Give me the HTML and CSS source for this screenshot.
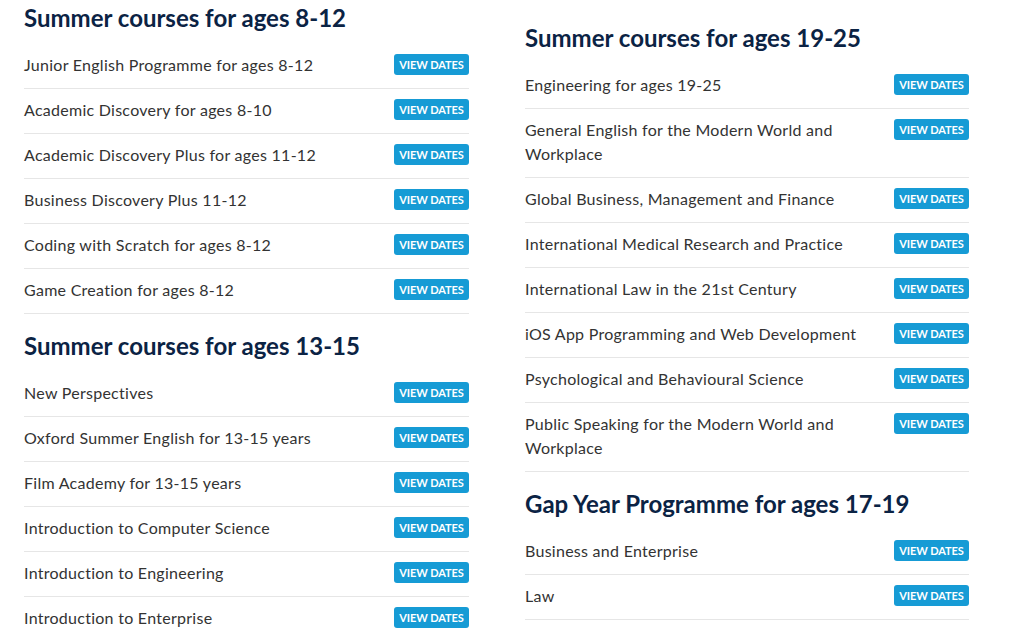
FILE: index.html
```html
<!DOCTYPE html>
<html lang="en">
<head>
<meta charset="utf-8">
<title>Summer courses</title>
<link rel="stylesheet" href="styles.css">
</head>
<body>
<div class="page">
  <div class="column column-left">
    <section class="group">
      <h2 class="group-title">Summer courses for ages 8-12</h2>
      <ul class="course-list">
        <li class="course"><span class="course-name">Junior English Programme for ages 8-12</span><a class="btn" href="#">View dates</a></li>
        <li class="course"><span class="course-name">Academic Discovery for ages 8-10</span><a class="btn" href="#">View dates</a></li>
        <li class="course"><span class="course-name">Academic Discovery Plus for ages 11-12</span><a class="btn" href="#">View dates</a></li>
        <li class="course"><span class="course-name">Business Discovery Plus 11-12</span><a class="btn" href="#">View dates</a></li>
        <li class="course"><span class="course-name">Coding with Scratch for ages 8-12</span><a class="btn" href="#">View dates</a></li>
        <li class="course"><span class="course-name">Game Creation for ages 8-12</span><a class="btn" href="#">View dates</a></li>
      </ul>
    </section>
    <section class="group">
      <h2 class="group-title">Summer courses for ages 13-15</h2>
      <ul class="course-list">
        <li class="course"><span class="course-name">New Perspectives</span><a class="btn" href="#">View dates</a></li>
        <li class="course"><span class="course-name">Oxford Summer English for 13-15 years</span><a class="btn" href="#">View dates</a></li>
        <li class="course"><span class="course-name">Film Academy for 13-15 years</span><a class="btn" href="#">View dates</a></li>
        <li class="course"><span class="course-name">Introduction to Computer Science</span><a class="btn" href="#">View dates</a></li>
        <li class="course"><span class="course-name">Introduction to Engineering</span><a class="btn" href="#">View dates</a></li>
        <li class="course"><span class="course-name">Introduction to Enterprise</span><a class="btn" href="#">View dates</a></li>
      </ul>
    </section>
  </div>
  <div class="column column-right">
    <section class="group">
      <h2 class="group-title">Summer courses for ages 19-25</h2>
      <ul class="course-list">
        <li class="course"><span class="course-name">Engineering for ages 19-25</span><a class="btn" href="#">View dates</a></li>
        <li class="course"><span class="course-name">General English for the Modern World and Workplace</span><a class="btn" href="#">View dates</a></li>
        <li class="course"><span class="course-name">Global Business, Management and Finance</span><a class="btn" href="#">View dates</a></li>
        <li class="course"><span class="course-name">International Medical Research and Practice</span><a class="btn" href="#">View dates</a></li>
        <li class="course"><span class="course-name">International Law in the 21st Century</span><a class="btn" href="#">View dates</a></li>
        <li class="course"><span class="course-name">iOS App Programming and Web Development</span><a class="btn" href="#">View dates</a></li>
        <li class="course"><span class="course-name">Psychological and Behavioural Science</span><a class="btn" href="#">View dates</a></li>
        <li class="course"><span class="course-name">Public Speaking for the Modern World and Workplace</span><a class="btn" href="#">View dates</a></li>
      </ul>
    </section>
    <section class="group">
      <h2 class="group-title">Gap Year Programme for ages 17-19</h2>
      <ul class="course-list">
        <li class="course"><span class="course-name">Business and Enterprise</span><a class="btn" href="#">View dates</a></li>
        <li class="course"><span class="course-name">Law</span><a class="btn" href="#">View dates</a></li>
      </ul>
    </section>
  </div>
</div>
</body>
</html>
```

FILE: styles.css
```css
html, body {
  margin: 0;
  padding: 0;
  background: #ffffff;
}

body {
  font-family: Lato, "Noto Sans", "Liberation Sans", sans-serif;
  color: #333333;
  overflow: hidden;
}

.page {
  display: grid;
  grid-template-columns: 445px 444px;
  column-gap: 56px;
  padding-left: 24px;
  align-items: start;
}

.column-left {
  padding-top: 3px;
}

.column-right {
  padding-top: 23px;
}

.group-title {
  margin: 17px 0 11px;
  font-size: 24px;
  line-height: 30px;
  font-weight: 700;
  color: #0b2344;
}

.group:first-child .group-title {
  margin-top: 0;
}

.course-list {
  list-style: none;
  margin: 0;
  padding: 0;
}

.course {
  display: flex;
  justify-content: space-between;
  align-items: flex-start;
  gap: 20px;
  padding: 10px 0;
  border-bottom: 1px solid #e6e6e6;
}

.course-name {
  margin: -1px 0 1px;
  font-size: 16px;
  line-height: 24px;
  letter-spacing: 0.27px;
  color: #333333;
  max-width: 345px;
}

.btn {
  flex: 0 0 75px;
  width: 75px;
  height: 21px;
  line-height: 21px;
  border-radius: 3px;
  background: #169bd5;
  color: #ffffff;
  text-align: center;
  text-decoration: none;
  text-transform: uppercase;
  font-size: 11px;
  font-weight: 700;
  letter-spacing: -0.1px;
  white-space: nowrap;
}
```
